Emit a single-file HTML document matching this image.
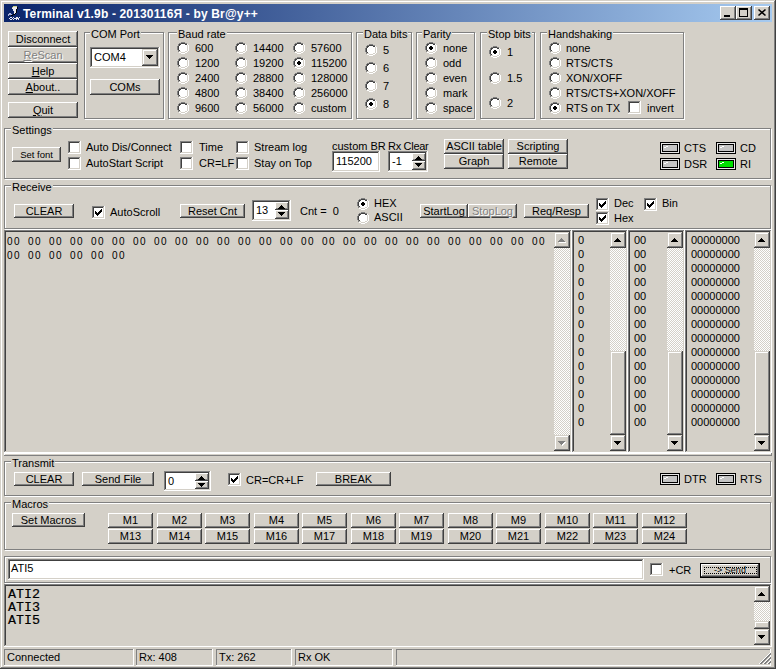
<!DOCTYPE html><html><head><meta charset="utf-8"><style>
html,body{margin:0;padding:0;}
body{width:776px;height:669px;overflow:hidden;position:relative;background:#D4D0C8;font-family:"Liberation Sans",sans-serif;font-size:11px;color:#000;}
#win{position:absolute;left:0;top:0;width:776px;height:669px;background:#D4D0C8;box-shadow:inset -1px -1px #404040, inset 1px 1px #D4D0C8, inset -2px -2px #808080, inset 2px 2px #fff;}
.ab{position:absolute;}
.t{position:absolute;white-space:pre;line-height:13px;font-size:11px;}
.btn{position:absolute;background:#D4D0C8;box-shadow:inset -1px -1px #404040, inset 1px 1px #fff, inset -2px -2px #808080, inset 2px 2px #D4D0C8;text-align:center;white-space:pre;font-size:11px;box-sizing:border-box;}
.sb{position:absolute;background:#D4D0C8;box-shadow:inset -1px -1px #404040, inset 1px 1px #D4D0C8, inset -2px -2px #808080, inset 2px 2px #fff;box-sizing:border-box;}
.btn span{position:relative;}
.dis span{color:#808080;text-shadow:1px 1px #fff;}
.grp{position:absolute;border:1px solid #808080;box-shadow:inset 1px 1px #fff, 1px 1px #fff;}
.glab{position:absolute;background:#D4D0C8;padding:0 1px;line-height:13px;white-space:pre;}
.sunk{position:absolute;box-sizing:border-box;box-shadow:inset -1px -1px #fff, inset 1px 1px #808080, inset -2px -2px #D4D0C8, inset 2px 2px #404040;}
.led{position:absolute;width:20px;height:12px;box-sizing:border-box;border:1px solid #000;box-shadow:inset 0 0 0 1px #E8E8E8;}
.ledi{position:absolute;left:1px;top:1px;width:14px;height:6px;border:1px solid #000;box-sizing:content-box;}
.ledi:before{content:'';position:absolute;left:1px;top:2px;width:2px;height:1px;background:#fff;}.ledi:after{content:'';position:absolute;left:3px;top:1px;width:2px;height:1px;background:#fff;}
.mono{position:absolute;white-space:pre;font-family:"Liberation Mono",monospace;}
.track{position:absolute;background:repeating-conic-gradient(#fff 0 25%, #D4D0C8 0 50%) 0 0/2px 2px;}
u{text-decoration:underline;text-underline-offset:1px;}
</style></head><body><div id="win"></div>

<svg width="0" height="0" style="position:absolute"><defs><g id="rd"><rect x="4" y="0" width="4" height="1" fill="#808080"/><rect x="2" y="1" width="2" height="1" fill="#808080"/><rect x="4" y="1" width="4" height="1" fill="#404040"/><rect x="8" y="1" width="2" height="1" fill="#808080"/><rect x="1" y="2" width="1" height="1" fill="#808080"/><rect x="2" y="2" width="2" height="1" fill="#404040"/><rect x="4" y="2" width="4" height="1" fill="#fff"/><rect x="8" y="2" width="2" height="1" fill="#404040"/><rect x="10" y="2" width="1" height="1" fill="#fff"/><rect x="1" y="3" width="1" height="1" fill="#808080"/><rect x="2" y="3" width="1" height="1" fill="#404040"/><rect x="3" y="3" width="7" height="1" fill="#fff"/><rect x="10" y="3" width="1" height="1" fill="#D4D0C8"/><rect x="11" y="3" width="1" height="1" fill="#fff"/><rect x="0" y="4" width="1" height="1" fill="#808080"/><rect x="1" y="4" width="1" height="1" fill="#404040"/><rect x="2" y="4" width="8" height="1" fill="#fff"/><rect x="10" y="4" width="1" height="1" fill="#D4D0C8"/><rect x="11" y="4" width="1" height="1" fill="#fff"/><rect x="0" y="5" width="1" height="1" fill="#808080"/><rect x="1" y="5" width="1" height="1" fill="#404040"/><rect x="2" y="5" width="8" height="1" fill="#fff"/><rect x="10" y="5" width="1" height="1" fill="#D4D0C8"/><rect x="11" y="5" width="1" height="1" fill="#fff"/><rect x="0" y="6" width="1" height="1" fill="#808080"/><rect x="1" y="6" width="1" height="1" fill="#404040"/><rect x="2" y="6" width="8" height="1" fill="#fff"/><rect x="10" y="6" width="1" height="1" fill="#D4D0C8"/><rect x="11" y="6" width="1" height="1" fill="#fff"/><rect x="0" y="7" width="1" height="1" fill="#808080"/><rect x="1" y="7" width="1" height="1" fill="#404040"/><rect x="2" y="7" width="8" height="1" fill="#fff"/><rect x="10" y="7" width="1" height="1" fill="#D4D0C8"/><rect x="11" y="7" width="1" height="1" fill="#fff"/><rect x="1" y="8" width="1" height="1" fill="#808080"/><rect x="2" y="8" width="1" height="1" fill="#404040"/><rect x="3" y="8" width="7" height="1" fill="#fff"/><rect x="10" y="8" width="1" height="1" fill="#D4D0C8"/><rect x="11" y="8" width="1" height="1" fill="#fff"/><rect x="1" y="9" width="1" height="1" fill="#808080"/><rect x="2" y="9" width="2" height="1" fill="#D4D0C8"/><rect x="4" y="9" width="4" height="1" fill="#fff"/><rect x="8" y="9" width="2" height="1" fill="#D4D0C8"/><rect x="10" y="9" width="1" height="1" fill="#fff"/><rect x="2" y="10" width="2" height="1" fill="#fff"/><rect x="4" y="10" width="4" height="1" fill="#D4D0C8"/><rect x="8" y="10" width="2" height="1" fill="#fff"/><rect x="4" y="11" width="4" height="1" fill="#fff"/></g><g id="dot"><rect x="5" y="4" width="2" height="1" fill="#000"/><rect x="4" y="5" width="4" height="1" fill="#000"/><rect x="4" y="6" width="4" height="1" fill="#000"/><rect x="5" y="7" width="2" height="1" fill="#000"/></g><g id="cb"><rect x="0" y="0" width="13" height="13" fill="#fff"/><rect x="0" y="0" width="12" height="1" fill="#808080"/><rect x="0" y="0" width="1" height="12" fill="#808080"/><rect x="1" y="1" width="10" height="1" fill="#404040"/><rect x="1" y="1" width="1" height="10" fill="#404040"/><rect x="1" y="11" width="11" height="1" fill="#D4D0C8"/><rect x="11" y="1" width="1" height="11" fill="#D4D0C8"/></g><g id="ck"><rect x="9" y="3" width="1" height="1" fill="#000"/><rect x="8" y="4" width="2" height="1" fill="#000"/><rect x="3" y="5" width="1" height="1" fill="#000"/><rect x="7" y="5" width="3" height="1" fill="#000"/><rect x="3" y="6" width="2" height="1" fill="#000"/><rect x="6" y="6" width="3" height="1" fill="#000"/><rect x="3" y="7" width="5" height="1" fill="#000"/><rect x="4" y="8" width="3" height="1" fill="#000"/><rect x="5" y="9" width="1" height="1" fill="#000"/></g><g id="au"><rect x="3" y="0" width="1" height="1" fill="#000"/><rect x="2" y="1" width="3" height="1" fill="#000"/><rect x="1" y="2" width="5" height="1" fill="#000"/><rect x="0" y="3" width="7" height="1" fill="#000"/></g><g id="ad"><rect x="0" y="0" width="7" height="1" fill="#000"/><rect x="1" y="1" width="5" height="1" fill="#000"/><rect x="2" y="2" width="3" height="1" fill="#000"/><rect x="3" y="3" width="1" height="1" fill="#000"/></g><g id="aug"><rect x="4" y="1" width="1" height="1" fill="#fff"/><rect x="3" y="2" width="3" height="1" fill="#fff"/><rect x="2" y="3" width="5" height="1" fill="#fff"/><rect x="1" y="4" width="7" height="1" fill="#fff"/><rect x="3" y="0" width="1" height="1" fill="#808080"/><rect x="2" y="1" width="3" height="1" fill="#808080"/><rect x="1" y="2" width="5" height="1" fill="#808080"/><rect x="0" y="3" width="7" height="1" fill="#808080"/></g><g id="adg"><rect x="1" y="1" width="7" height="1" fill="#fff"/><rect x="2" y="2" width="5" height="1" fill="#fff"/><rect x="3" y="3" width="3" height="1" fill="#fff"/><rect x="4" y="4" width="1" height="1" fill="#fff"/><rect x="0" y="0" width="7" height="1" fill="#808080"/><rect x="1" y="1" width="5" height="1" fill="#808080"/><rect x="2" y="2" width="3" height="1" fill="#808080"/><rect x="3" y="3" width="1" height="1" fill="#808080"/></g></defs></svg>
<div class="ab" style="left:4px;top:4px;width:768px;height:18px;background:linear-gradient(to right,#0A246A,#A6CAF0);"></div>
<div class="ab" style="left:23px;top:5px;height:18px;line-height:18px;color:#fff;font-weight:bold;font-size:12px;letter-spacing:0.16px;white-space:pre;">Terminal v1.9b - 20130116Я - by Br@y++</div>
<svg class="ab" style="left:6px;top:5px" width="16" height="16"><rect x="7" y="1" width="4" height="1" fill="#c8d088"/><rect x="6" y="2" width="1" height="1" fill="#c8d088"/><rect x="7" y="2" width="4" height="1" fill="#e8e8f0"/><rect x="11" y="2" width="1" height="1" fill="#000"/><rect x="6" y="3" width="5" height="1" fill="#e8e8f0"/><rect x="11" y="3" width="1" height="1" fill="#000"/><rect x="7" y="4" width="3" height="1" fill="#e8e8f0"/><rect x="10" y="4" width="1" height="1" fill="#000"/><rect x="7" y="5" width="3" height="1" fill="#e8e8f0"/><rect x="10" y="5" width="1" height="1" fill="#000"/><rect x="8" y="6" width="2" height="1" fill="#e8e8f0"/><rect x="10" y="6" width="1" height="1" fill="#000"/><rect x="8" y="7" width="2" height="1" fill="#e8e8f0"/><rect x="10" y="7" width="1" height="1" fill="#000"/><rect x="3" y="8" width="2" height="1" fill="#a8b0d8"/><rect x="8" y="8" width="1" height="1" fill="#e8e8f0"/><rect x="9" y="8" width="1" height="1" fill="#000"/><rect x="2" y="9" width="4" height="1" fill="#a8b0d8"/><rect x="7" y="9" width="2" height="1" fill="#000"/><rect x="2" y="10" width="1" height="1" fill="#a8b0d8"/><rect x="5" y="10" width="2" height="1" fill="#000"/><rect x="4" y="12" width="2" height="1" fill="#e8e8f0"/><rect x="7" y="12" width="1" height="1" fill="#e8e8f0"/><rect x="10" y="12" width="2" height="1" fill="#e8e8f0"/><rect x="13" y="12" width="1" height="1" fill="#e8e8f0"/><rect x="3" y="13" width="1" height="1" fill="#e8e8f0"/><rect x="6" y="13" width="1" height="1" fill="#e8e8f0"/><rect x="8" y="13" width="5" height="1" fill="#e8e8f0"/><rect x="4" y="14" width="2" height="1" fill="#e8e8f0"/><rect x="7" y="14" width="1" height="1" fill="#e8e8f0"/><rect x="10" y="14" width="1" height="1" fill="#e8e8f0"/><rect x="12" y="14" width="1" height="1" fill="#e8e8f0"/></svg>
<div class="btn" style="left:720px;top:6px;width:16px;height:14px"><svg width="16" height="14" class="ab" style="left:0;top:0"><rect x="4" y="9" width="6" height="2" fill="#000"/></svg></div>
<div class="btn" style="left:736px;top:6px;width:16px;height:14px"><svg width="16" height="14" class="ab" style="left:0;top:0"><rect x="3.5" y="2.5" width="8" height="8" fill="none" stroke="#000"/><rect x="3" y="2" width="9" height="2" fill="#000"/></svg></div>
<div class="btn" style="left:754px;top:6px;width:16px;height:14px"><svg width="16" height="14" class="ab" style="left:0;top:0"><path d="M4.5 3.5l7 6M11.5 3.5l-7 6" stroke="#000" stroke-width="1.6"/></svg></div>
<div class="btn" style="left:8px;top:31px;width:70px;height:16px;line-height:16px;"><span>Disconnect</span></div>
<div class="btn dis" style="left:8px;top:47px;width:70px;height:16px;line-height:16px;"><span><u>R</u>eScan</span></div>
<div class="btn" style="left:8px;top:63px;width:70px;height:16px;line-height:16px;"><span><u>H</u>elp</span></div>
<div class="btn" style="left:8px;top:79px;width:70px;height:16px;line-height:16px;"><span><u>A</u>bout..</span></div>
<div class="btn" style="left:8px;top:102px;width:70px;height:16px;line-height:16px;"><span><u>Q</u>uit</span></div>
<div class="grp" style="left:84px;top:32px;width:78px;height:85px"></div>
<div class="glab" style="left:90px;top:28px">COM Port</div>
<div class="sunk" style="left:90px;top:47px;width:70px;height:21px;background:#fff;"></div>
<div class="t" style="left:94px;top:51px;">COM4</div>
<div class="sb" style="left:142px;top:49px;width:16px;height:17px"><svg width="16" height="17" class="ab" style="left:0;top:0"><use href="#ad" x="4" y="6"/></svg></div>
<div class="btn" style="left:90px;top:79px;width:70px;height:16px;line-height:16px;"><span>COMs</span></div>
<div class="grp" style="left:168px;top:32px;width:182px;height:85px"></div>
<div class="glab" style="left:177px;top:28px">Baud rate</div>
<svg class="ab" style="left:177px;top:42px" width="12" height="12"><use href="#rd"/></svg>
<div class="t" style="left:195px;top:42px;">600</div>
<svg class="ab" style="left:177px;top:57px" width="12" height="12"><use href="#rd"/></svg>
<div class="t" style="left:195px;top:57px;">1200</div>
<svg class="ab" style="left:177px;top:72px" width="12" height="12"><use href="#rd"/></svg>
<div class="t" style="left:195px;top:72px;">2400</div>
<svg class="ab" style="left:177px;top:87px" width="12" height="12"><use href="#rd"/></svg>
<div class="t" style="left:195px;top:87px;">4800</div>
<svg class="ab" style="left:177px;top:102px" width="12" height="12"><use href="#rd"/></svg>
<div class="t" style="left:195px;top:102px;">9600</div>
<svg class="ab" style="left:235px;top:42px" width="12" height="12"><use href="#rd"/></svg>
<div class="t" style="left:253px;top:42px;">14400</div>
<svg class="ab" style="left:235px;top:57px" width="12" height="12"><use href="#rd"/></svg>
<div class="t" style="left:253px;top:57px;">19200</div>
<svg class="ab" style="left:235px;top:72px" width="12" height="12"><use href="#rd"/></svg>
<div class="t" style="left:253px;top:72px;">28800</div>
<svg class="ab" style="left:235px;top:87px" width="12" height="12"><use href="#rd"/></svg>
<div class="t" style="left:253px;top:87px;">38400</div>
<svg class="ab" style="left:235px;top:102px" width="12" height="12"><use href="#rd"/></svg>
<div class="t" style="left:253px;top:102px;">56000</div>
<svg class="ab" style="left:293px;top:42px" width="12" height="12"><use href="#rd"/></svg>
<div class="t" style="left:311px;top:42px;">57600</div>
<svg class="ab" style="left:293px;top:57px" width="12" height="12"><use href="#rd"/><use href="#dot"/></svg>
<div class="t" style="left:311px;top:57px;">115200</div>
<svg class="ab" style="left:293px;top:72px" width="12" height="12"><use href="#rd"/></svg>
<div class="t" style="left:311px;top:72px;">128000</div>
<svg class="ab" style="left:293px;top:87px" width="12" height="12"><use href="#rd"/></svg>
<div class="t" style="left:311px;top:87px;">256000</div>
<svg class="ab" style="left:293px;top:102px" width="12" height="12"><use href="#rd"/></svg>
<div class="t" style="left:311px;top:102px;">custom</div>
<div class="grp" style="left:356px;top:32px;width:54px;height:85px"></div>
<div class="glab" style="left:363px;top:28px">Data bits</div>
<svg class="ab" style="left:365px;top:44px" width="12" height="12"><use href="#rd"/></svg>
<div class="t" style="left:383px;top:44px;">5</div>
<svg class="ab" style="left:365px;top:62px" width="12" height="12"><use href="#rd"/></svg>
<div class="t" style="left:383px;top:62px;">6</div>
<svg class="ab" style="left:365px;top:80px" width="12" height="12"><use href="#rd"/></svg>
<div class="t" style="left:383px;top:80px;">7</div>
<svg class="ab" style="left:365px;top:98px" width="12" height="12"><use href="#rd"/><use href="#dot"/></svg>
<div class="t" style="left:383px;top:98px;">8</div>
<div class="grp" style="left:416px;top:32px;width:57px;height:85px"></div>
<div class="glab" style="left:422px;top:28px">Parity</div>
<svg class="ab" style="left:425px;top:42px" width="12" height="12"><use href="#rd"/><use href="#dot"/></svg>
<div class="t" style="left:443px;top:42px;">none</div>
<svg class="ab" style="left:425px;top:57px" width="12" height="12"><use href="#rd"/></svg>
<div class="t" style="left:443px;top:57px;">odd</div>
<svg class="ab" style="left:425px;top:72px" width="12" height="12"><use href="#rd"/></svg>
<div class="t" style="left:443px;top:72px;">even</div>
<svg class="ab" style="left:425px;top:87px" width="12" height="12"><use href="#rd"/></svg>
<div class="t" style="left:443px;top:87px;">mark</div>
<svg class="ab" style="left:425px;top:102px" width="12" height="12"><use href="#rd"/></svg>
<div class="t" style="left:443px;top:102px;">space</div>
<div class="grp" style="left:480px;top:32px;width:53px;height:85px"></div>
<div class="glab" style="left:487px;top:28px">Stop bits</div>
<svg class="ab" style="left:489px;top:46px" width="12" height="12"><use href="#rd"/><use href="#dot"/></svg>
<div class="t" style="left:507px;top:46px;">1</div>
<svg class="ab" style="left:489px;top:72px" width="12" height="12"><use href="#rd"/></svg>
<div class="t" style="left:507px;top:72px;">1.5</div>
<svg class="ab" style="left:489px;top:97px" width="12" height="12"><use href="#rd"/></svg>
<div class="t" style="left:507px;top:97px;">2</div>
<div class="grp" style="left:540px;top:32px;width:142px;height:85px"></div>
<div class="glab" style="left:547px;top:28px">Handshaking</div>
<svg class="ab" style="left:549px;top:42px" width="12" height="12"><use href="#rd"/></svg>
<div class="t" style="left:566px;top:42px;">none</div>
<svg class="ab" style="left:549px;top:57px" width="12" height="12"><use href="#rd"/></svg>
<div class="t" style="left:566px;top:57px;">RTS/CTS</div>
<svg class="ab" style="left:549px;top:72px" width="12" height="12"><use href="#rd"/></svg>
<div class="t" style="left:566px;top:72px;">XON/XOFF</div>
<svg class="ab" style="left:549px;top:87px" width="12" height="12"><use href="#rd"/></svg>
<div class="t" style="left:566px;top:87px;">RTS/CTS+XON/XOFF</div>
<svg class="ab" style="left:549px;top:102px" width="12" height="12"><use href="#rd"/><use href="#dot"/></svg>
<div class="t" style="left:566px;top:102px;">RTS on TX</div>
<svg class="ab" style="left:628px;top:101px" width="13" height="13"><use href="#cb"/></svg>
<div class="t" style="left:647px;top:102px;">invert</div>
<div class="grp" style="left:4px;top:128px;width:765px;height:49px"></div>
<div class="glab" style="left:11px;top:124px">Settings</div>
<div class="btn" style="left:12px;top:147px;width:49px;height:15px;line-height:15px;font-size:9.5px;"><span>Set font</span></div>
<svg class="ab" style="left:68px;top:141px" width="13" height="13"><use href="#cb"/></svg>
<div class="t" style="left:86px;top:141px;">Auto Dis/Connect</div>
<svg class="ab" style="left:68px;top:157px" width="13" height="13"><use href="#cb"/></svg>
<div class="t" style="left:86px;top:157px;">AutoStart Script</div>
<svg class="ab" style="left:180px;top:141px" width="13" height="13"><use href="#cb"/></svg>
<div class="t" style="left:199px;top:141px;">Time</div>
<svg class="ab" style="left:180px;top:157px" width="13" height="13"><use href="#cb"/></svg>
<div class="t" style="left:199px;top:157px;">CR=LF</div>
<svg class="ab" style="left:236px;top:141px" width="13" height="13"><use href="#cb"/></svg>
<div class="t" style="left:254px;top:141px;">Stream log</div>
<svg class="ab" style="left:236px;top:157px" width="13" height="13"><use href="#cb"/></svg>
<div class="t" style="left:254px;top:157px;">Stay on Top</div>
<div class="t" style="left:332px;top:140px;">custom BR</div>
<div class="sunk" style="left:332px;top:151px;width:48px;height:21px;background:#fff;"></div>
<div class="t" style="left:336px;top:155px;">115200</div>
<div class="t" style="left:388px;top:140px;letter-spacing:-0.3px;">Rx Clear</div>
<div class="sunk" style="left:388px;top:151px;width:40px;height:21px;background:#fff;"></div>
<div class="t" style="left:392px;top:155px;">-1</div>
<div class="btn" style="left:412px;top:153px;width:14px;height:8px"><svg width="14" height="8" class="ab" style="left:0;top:0"><use href="#au" x="3" y="3"/></svg></div>
<div class="btn" style="left:412px;top:161px;width:14px;height:9px"><svg width="14" height="9" class="ab" style="left:0;top:0"><use href="#ad" x="3" y="2"/></svg></div>
<div class="btn" style="left:444px;top:139px;width:60px;height:15px;line-height:15px;"><span>ASCII table</span></div>
<div class="btn" style="left:444px;top:154px;width:60px;height:15px;line-height:15px;"><span>Graph</span></div>
<div class="btn" style="left:508px;top:139px;width:60px;height:15px;line-height:15px;"><span>Scripting</span></div>
<div class="btn" style="left:508px;top:154px;width:60px;height:15px;line-height:15px;"><span>Remote</span></div>
<div class="led" style="left:660px;top:142px"><div class="ledi" style="background:#C4C4C4"></div></div>
<div class="t" style="left:684px;top:142px;">CTS</div>
<div class="led" style="left:660px;top:158px"><div class="ledi" style="background:#C4C4C4"></div></div>
<div class="t" style="left:684px;top:158px;">DSR</div>
<div class="led" style="left:716px;top:142px"><div class="ledi" style="background:#C4C4C4"></div></div>
<div class="t" style="left:740px;top:142px;">CD</div>
<div class="led" style="left:716px;top:158px"><div class="ledi" style="background:#00E000"></div></div>
<div class="t" style="left:740px;top:158px;">RI</div>
<div class="grp" style="left:4px;top:185px;width:765px;height:42px"></div>
<div class="glab" style="left:11px;top:181px">Receive</div>
<div class="btn" style="left:14px;top:204px;width:60px;height:14px;line-height:14px;"><span>CLEAR</span></div>
<svg class="ab" style="left:92px;top:206px" width="13" height="13"><use href="#cb"/><use href="#ck"/></svg>
<div class="t" style="left:110px;top:206px;">AutoScroll</div>
<div class="btn" style="left:180px;top:204px;width:65px;height:14px;line-height:14px;"><span>Reset Cnt</span></div>
<div class="sunk" style="left:252px;top:200px;width:39px;height:21px;background:#fff;"></div>
<div class="t" style="left:256px;top:204px;">13</div>
<div class="btn" style="left:275px;top:202px;width:14px;height:8px"><svg width="14" height="8" class="ab" style="left:0;top:0"><use href="#au" x="3" y="3"/></svg></div>
<div class="btn" style="left:275px;top:210px;width:14px;height:9px"><svg width="14" height="9" class="ab" style="left:0;top:0"><use href="#ad" x="3" y="2"/></svg></div>
<div class="t" style="left:300px;top:205px;">Cnt =  0</div>
<svg class="ab" style="left:357px;top:198px" width="12" height="12"><use href="#rd"/><use href="#dot"/></svg>
<div class="t" style="left:374px;top:197px;">HEX</div>
<svg class="ab" style="left:357px;top:212px" width="12" height="12"><use href="#rd"/></svg>
<div class="t" style="left:374px;top:211px;">ASCII</div>
<div class="btn" style="left:420px;top:204px;width:48px;height:14px;line-height:14px;"><span>StartLog</span></div>
<div class="btn dis" style="left:468px;top:204px;width:49px;height:14px;line-height:14px;"><span>StopLog</span></div>
<div class="btn" style="left:524px;top:204px;width:65px;height:14px;line-height:14px;"><span>Req/Resp</span></div>
<svg class="ab" style="left:596px;top:198px" width="13" height="13"><use href="#cb"/><use href="#ck"/></svg>
<div class="t" style="left:614px;top:197px;">Dec</div>
<svg class="ab" style="left:644px;top:198px" width="13" height="13"><use href="#cb"/><use href="#ck"/></svg>
<div class="t" style="left:662px;top:197px;">Bin</div>
<svg class="ab" style="left:596px;top:212px" width="13" height="13"><use href="#cb"/><use href="#ck"/></svg>
<div class="t" style="left:614px;top:212px;">Hex</div>
<div class="ab" style="left:4px;top:453px;width:768px;height:3px;box-shadow:inset -1px -1px #808080, inset 1px 1px #fff;"></div>
<div class="sunk" style="left:4px;top:230px;width:568px;height:223px;background:#D4D0C8;"></div>
<div class="track" style="left:554px;top:248px;width:16px;height:187px"></div>
<div class="sb" style="left:554px;top:232px;width:16px;height:16px"><svg width="16" height="16" class="ab" style="left:0;top:0"><use href="#aug" x="4" y="6"/></svg></div>
<div class="sb" style="left:554px;top:435px;width:16px;height:16px"><svg width="16" height="16" class="ab" style="left:0;top:0"><use href="#adg" x="4" y="6"/></svg></div>
<div class="sunk" style="left:572px;top:230px;width:56px;height:223px;background:#D4D0C8;"></div>
<div class="track" style="left:610px;top:248px;width:16px;height:103px"></div>
<div class="sb" style="left:610px;top:351px;width:16px;height:84px"></div>
<div class="sb" style="left:610px;top:232px;width:16px;height:16px"><svg width="16" height="16" class="ab" style="left:0;top:0"><use href="#au" x="4" y="6"/></svg></div>
<div class="sb" style="left:610px;top:435px;width:16px;height:16px"><svg width="16" height="16" class="ab" style="left:0;top:0"><use href="#ad" x="4" y="6"/></svg></div>
<div class="sunk" style="left:628px;top:230px;width:57px;height:223px;background:#D4D0C8;"></div>
<div class="track" style="left:667px;top:248px;width:16px;height:103px"></div>
<div class="sb" style="left:667px;top:351px;width:16px;height:84px"></div>
<div class="sb" style="left:667px;top:232px;width:16px;height:16px"><svg width="16" height="16" class="ab" style="left:0;top:0"><use href="#au" x="4" y="6"/></svg></div>
<div class="sb" style="left:667px;top:435px;width:16px;height:16px"><svg width="16" height="16" class="ab" style="left:0;top:0"><use href="#ad" x="4" y="6"/></svg></div>
<div class="sunk" style="left:685px;top:230px;width:87px;height:223px;background:#D4D0C8;"></div>
<div class="track" style="left:754px;top:248px;width:16px;height:103px"></div>
<div class="sb" style="left:754px;top:351px;width:16px;height:84px"></div>
<div class="sb" style="left:754px;top:232px;width:16px;height:16px"><svg width="16" height="16" class="ab" style="left:0;top:0"><use href="#au" x="4" y="6"/></svg></div>
<div class="sb" style="left:754px;top:435px;width:16px;height:16px"><svg width="16" height="16" class="ab" style="left:0;top:0"><use href="#ad" x="4" y="6"/></svg></div>
<div class="ab" style="left:7px;top:235px;font-size:10px;letter-spacing:1.44px;word-spacing:2.78px;line-height:14px;white-space:pre;">00 00 00 00 00 00 00 00 00 00 00 00 00 00 00 00 00 00 00 00 00 00 00 00 00 00
00 00 00 00 00 00</div>
<div class="t" style="left:578px;top:234px;">0</div>
<div class="t" style="left:634px;top:234px;">00</div>
<div class="t" style="left:691px;top:234px;">00000000</div>
<div class="t" style="left:578px;top:248px;">0</div>
<div class="t" style="left:634px;top:248px;">00</div>
<div class="t" style="left:691px;top:248px;">00000000</div>
<div class="t" style="left:578px;top:262px;">0</div>
<div class="t" style="left:634px;top:262px;">00</div>
<div class="t" style="left:691px;top:262px;">00000000</div>
<div class="t" style="left:578px;top:276px;">0</div>
<div class="t" style="left:634px;top:276px;">00</div>
<div class="t" style="left:691px;top:276px;">00000000</div>
<div class="t" style="left:578px;top:290px;">0</div>
<div class="t" style="left:634px;top:290px;">00</div>
<div class="t" style="left:691px;top:290px;">00000000</div>
<div class="t" style="left:578px;top:304px;">0</div>
<div class="t" style="left:634px;top:304px;">00</div>
<div class="t" style="left:691px;top:304px;">00000000</div>
<div class="t" style="left:578px;top:318px;">0</div>
<div class="t" style="left:634px;top:318px;">00</div>
<div class="t" style="left:691px;top:318px;">00000000</div>
<div class="t" style="left:578px;top:332px;">0</div>
<div class="t" style="left:634px;top:332px;">00</div>
<div class="t" style="left:691px;top:332px;">00000000</div>
<div class="t" style="left:578px;top:346px;">0</div>
<div class="t" style="left:634px;top:346px;">00</div>
<div class="t" style="left:691px;top:346px;">00000000</div>
<div class="t" style="left:578px;top:360px;">0</div>
<div class="t" style="left:634px;top:360px;">00</div>
<div class="t" style="left:691px;top:360px;">00000000</div>
<div class="t" style="left:578px;top:374px;">0</div>
<div class="t" style="left:634px;top:374px;">00</div>
<div class="t" style="left:691px;top:374px;">00000000</div>
<div class="t" style="left:578px;top:388px;">0</div>
<div class="t" style="left:634px;top:388px;">00</div>
<div class="t" style="left:691px;top:388px;">00000000</div>
<div class="t" style="left:578px;top:402px;">0</div>
<div class="t" style="left:634px;top:402px;">00</div>
<div class="t" style="left:691px;top:402px;">00000000</div>
<div class="t" style="left:578px;top:416px;">0</div>
<div class="t" style="left:634px;top:416px;">00</div>
<div class="t" style="left:691px;top:416px;">00000000</div>
<div class="grp" style="left:4px;top:461px;width:765px;height:33px"></div>
<div class="glab" style="left:11px;top:457px">Transmit</div>
<div class="btn" style="left:14px;top:472px;width:60px;height:14px;line-height:14px;"><span>CLEAR</span></div>
<div class="btn" style="left:82px;top:472px;width:72px;height:14px;line-height:14px;"><span>Send File</span></div>
<div class="sunk" style="left:164px;top:471px;width:47px;height:20px;background:#fff;"></div>
<div class="t" style="left:168px;top:475px;">0</div>
<div class="btn" style="left:195px;top:473px;width:14px;height:8px"><svg width="14" height="8" class="ab" style="left:0;top:0"><use href="#au" x="3" y="3"/></svg></div>
<div class="btn" style="left:195px;top:481px;width:14px;height:8px"><svg width="14" height="8" class="ab" style="left:0;top:0"><use href="#ad" x="3" y="2"/></svg></div>
<svg class="ab" style="left:228px;top:473px" width="13" height="13"><use href="#cb"/><use href="#ck"/></svg>
<div class="t" style="left:246px;top:474px;">CR=CR+LF</div>
<div class="btn" style="left:316px;top:472px;width:75px;height:14px;line-height:14px;"><span>BREAK</span></div>
<div class="led" style="left:660px;top:473px"><div class="ledi" style="background:#C4C4C4"></div></div>
<div class="t" style="left:684px;top:473px;">DTR</div>
<div class="led" style="left:716px;top:473px"><div class="ledi" style="background:#C4C4C4"></div></div>
<div class="t" style="left:740px;top:473px;">RTS</div>
<div class="grp" style="left:4px;top:502px;width:765px;height:46px"></div>
<div class="glab" style="left:11px;top:498px">Macros</div>
<div class="btn" style="left:12px;top:513px;width:73px;height:14px;line-height:14px;"><span>Set Macros</span></div>
<div class="btn" style="left:108px;top:513px;width:45px;height:15px;line-height:15px;"><span>M1</span></div>
<div class="btn" style="left:108px;top:529px;width:45px;height:15px;line-height:15px;"><span>M13</span></div>
<div class="btn" style="left:157px;top:513px;width:45px;height:15px;line-height:15px;"><span>M2</span></div>
<div class="btn" style="left:157px;top:529px;width:45px;height:15px;line-height:15px;"><span>M14</span></div>
<div class="btn" style="left:205px;top:513px;width:45px;height:15px;line-height:15px;"><span>M3</span></div>
<div class="btn" style="left:205px;top:529px;width:45px;height:15px;line-height:15px;"><span>M15</span></div>
<div class="btn" style="left:254px;top:513px;width:45px;height:15px;line-height:15px;"><span>M4</span></div>
<div class="btn" style="left:254px;top:529px;width:45px;height:15px;line-height:15px;"><span>M16</span></div>
<div class="btn" style="left:302px;top:513px;width:45px;height:15px;line-height:15px;"><span>M5</span></div>
<div class="btn" style="left:302px;top:529px;width:45px;height:15px;line-height:15px;"><span>M17</span></div>
<div class="btn" style="left:351px;top:513px;width:45px;height:15px;line-height:15px;"><span>M6</span></div>
<div class="btn" style="left:351px;top:529px;width:45px;height:15px;line-height:15px;"><span>M18</span></div>
<div class="btn" style="left:399px;top:513px;width:45px;height:15px;line-height:15px;"><span>M7</span></div>
<div class="btn" style="left:399px;top:529px;width:45px;height:15px;line-height:15px;"><span>M19</span></div>
<div class="btn" style="left:448px;top:513px;width:45px;height:15px;line-height:15px;"><span>M8</span></div>
<div class="btn" style="left:448px;top:529px;width:45px;height:15px;line-height:15px;"><span>M20</span></div>
<div class="btn" style="left:496px;top:513px;width:45px;height:15px;line-height:15px;"><span>M9</span></div>
<div class="btn" style="left:496px;top:529px;width:45px;height:15px;line-height:15px;"><span>M21</span></div>
<div class="btn" style="left:545px;top:513px;width:45px;height:15px;line-height:15px;"><span>M10</span></div>
<div class="btn" style="left:545px;top:529px;width:45px;height:15px;line-height:15px;"><span>M22</span></div>
<div class="btn" style="left:593px;top:513px;width:45px;height:15px;line-height:15px;"><span>M11</span></div>
<div class="btn" style="left:593px;top:529px;width:45px;height:15px;line-height:15px;"><span>M23</span></div>
<div class="btn" style="left:642px;top:513px;width:45px;height:15px;line-height:15px;"><span>M12</span></div>
<div class="btn" style="left:642px;top:529px;width:45px;height:15px;line-height:15px;"><span>M24</span></div>
<div class="grp" style="left:4px;top:556px;width:765px;height:25px"></div>
<div class="sunk" style="left:8px;top:559px;width:636px;height:21px;background:#fff;"></div>
<div class="t" style="left:11px;top:562px;">ATI5</div>
<svg class="ab" style="left:650px;top:563px" width="13" height="13"><use href="#cb"/></svg>
<div class="t" style="left:669px;top:564px;">+CR</div>
<div class="btn" style="left:700px;top:563px;width:60px;height:15px;box-shadow:inset -1px -1px #000, inset 1px 1px #000, inset -2px -2px #404040, inset 2px 2px #fff, inset -3px -3px #808080;"><div class="ab" style="left:4px;top:4px;width:51px;height:5px;border:1px dotted #000;"></div><span class="ab" style="left:0;width:60px;top:0;line-height:15px;font-size:9px;">-&gt; Send</span></div>
<div class="sunk" style="left:4px;top:584px;width:768px;height:63px;background:#D4D0C8;"></div>
<div class="mono" style="left:8px;top:588px;font-size:13.33px;line-height:13px;-webkit-text-stroke:0.2px #000;">ATI2
ATI3
ATI5</div>
<div class="track" style="left:754px;top:602px;width:16px;height:27px"></div>
<div class="sb" style="left:754px;top:621px;width:16px;height:8px"></div>
<div class="sb" style="left:754px;top:586px;width:16px;height:16px"><svg width="16" height="16" class="ab" style="left:0;top:0"><use href="#au" x="4" y="6"/></svg></div>
<div class="sb" style="left:754px;top:629px;width:16px;height:16px"><svg width="16" height="16" class="ab" style="left:0;top:0"><use href="#ad" x="4" y="6"/></svg></div>
<div class="ab" style="left:4px;top:649px;width:130px;height:17px;box-sizing:border-box;box-shadow:inset -1px -1px #fff, inset 1px 1px #808080;"></div>
<div class="t" style="left:7px;top:651px;">Connected</div>
<div class="ab" style="left:136px;top:649px;width:77px;height:17px;box-sizing:border-box;box-shadow:inset -1px -1px #fff, inset 1px 1px #808080;"></div>
<div class="t" style="left:139px;top:651px;">Rx: 408</div>
<div class="ab" style="left:216px;top:649px;width:76px;height:17px;box-sizing:border-box;box-shadow:inset -1px -1px #fff, inset 1px 1px #808080;"></div>
<div class="t" style="left:219px;top:651px;">Tx: 262</div>
<div class="ab" style="left:295px;top:649px;width:98px;height:17px;box-sizing:border-box;box-shadow:inset -1px -1px #fff, inset 1px 1px #808080;"></div>
<div class="t" style="left:298px;top:651px;">Rx OK</div>
<div class="ab" style="left:396px;top:649px;width:375px;height:17px;box-sizing:border-box;box-shadow:inset -1px -1px #fff, inset 1px 1px #808080;"></div>
<svg class="ab" style="left:758px;top:651px" width="14" height="14"><path d="M13 1L1 13M13 5L5 13M13 9L9 13" stroke="#fff" stroke-width="1"/><path d="M13 2L2 13M13 3L3 13M13 6L6 13M13 7L7 13M13 10L10 13M13 11L11 13" stroke="#808080" stroke-width="1"/></svg>
</body></html>
